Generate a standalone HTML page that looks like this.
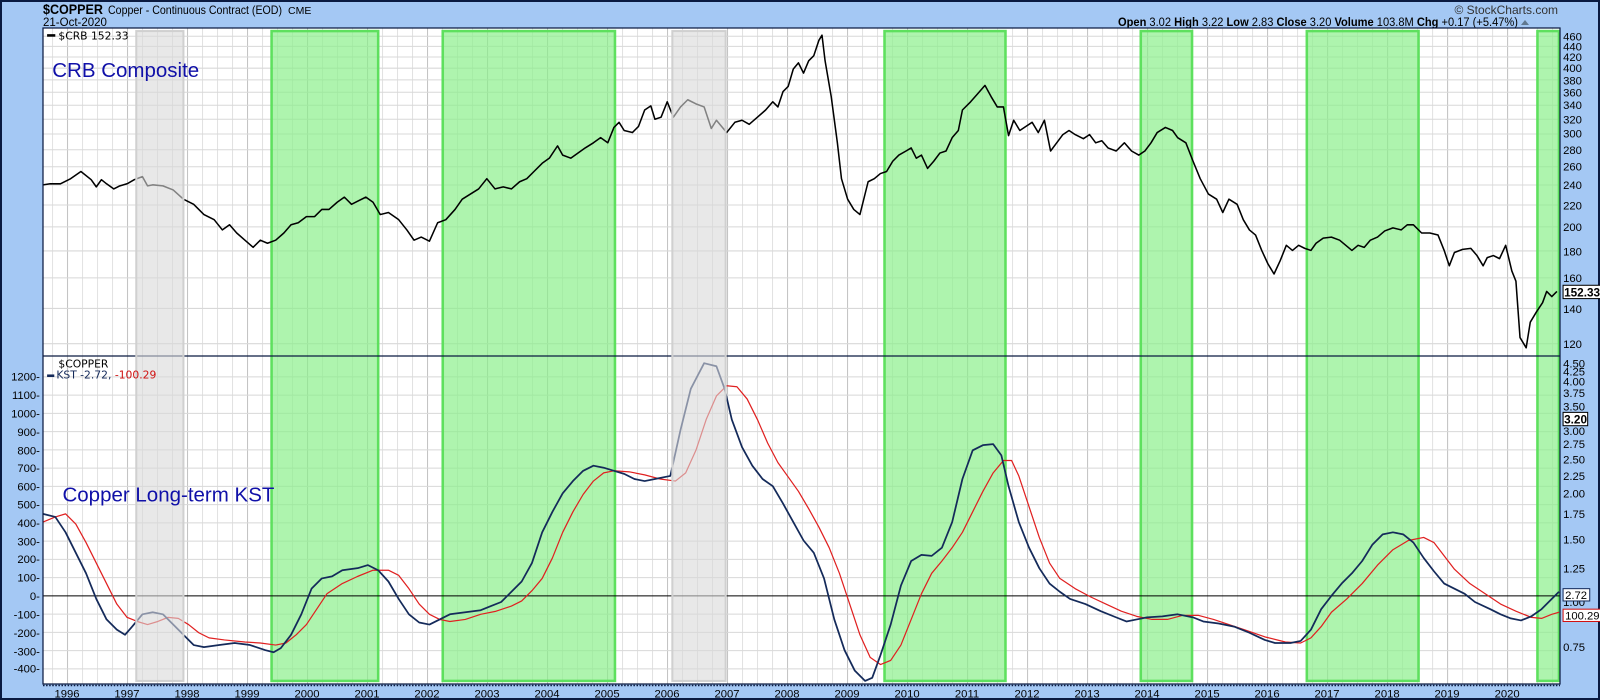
<!DOCTYPE html>
<html><head><meta charset="utf-8"><style>
html,body{margin:0;padding:0;background:#a4c8f4;}
svg{display:block;font-family:"Liberation Sans",Arial,sans-serif;}
</style></head><body>
<svg width="1600" height="700" viewBox="0 0 1600 700" xmlns="http://www.w3.org/2000/svg">
<defs>
<pattern id="vq" patternUnits="userSpaceOnUse" x="7.865" y="0" width="14.635" height="700">
<line x1="0.5" y1="0" x2="0.5" y2="700" stroke="#e2e2e2" stroke-width="1"/></pattern>
<pattern id="vy" patternUnits="userSpaceOnUse" x="7.86" y="0" width="58.54" height="700">
<line x1="0.5" y1="0" x2="0.5" y2="700" stroke="#c4c4c4" stroke-width="1"/></pattern>
</defs>
<rect x="0" y="0" width="1600" height="700" fill="#a4c8f4"/>
<rect x="1" y="1" width="1598" height="698" fill="none" stroke="#0a1a40" stroke-width="2"/>
<!-- header -->
<text x="43" y="14" font-size="14" font-weight="bold" fill="#000" textLength="60" lengthAdjust="spacingAndGlyphs">$COPPER</text>
<text x="108" y="14" font-size="12" fill="#000" textLength="174" lengthAdjust="spacingAndGlyphs">Copper - Continuous Contract (EOD)</text>
<text x="288" y="14" font-size="10.5" fill="#000">CME</text>
<text x="43" y="26" font-size="11.5" fill="#000">21-Oct-2020</text>
<text x="1558" y="14" font-size="12" fill="#333" text-anchor="end">© StockCharts.com</text>
<text x="1518" y="26" font-size="11.5" fill="#000" text-anchor="end" textLength="400" lengthAdjust="spacingAndGlyphs"><tspan font-weight="bold">Open</tspan> 3.02 <tspan font-weight="bold">High</tspan> 3.22 <tspan font-weight="bold">Low</tspan> 2.83 <tspan font-weight="bold">Close</tspan> 3.20 <tspan font-weight="bold">Volume</tspan> 103.8M <tspan font-weight="bold">Chg</tspan> +0.17 (+5.47%)</text>
<path d="M1521 25 l4 -5 l4 5z" fill="#607890"/>

<g transform="translate(43,28) scale(1.025) translate(-43,-28)">
<rect x="43" y="28" width="1480" height="640" fill="#fff"/>
<rect x="43" y="28" width="1480" height="640" fill="url(#vq)"/>
<rect x="43" y="28" width="1480" height="640" fill="url(#vy)"/>
<g stroke="#d8d8d8" stroke-width="1">
<line x1="43" x2="1523" y1="336" y2="336"/><line x1="43" x2="1523" y1="301.6" y2="301.6"/><line x1="43" x2="1523" y1="271.8" y2="271.8"/><line x1="43" x2="1523" y1="245.5" y2="245.5"/><line x1="43" x2="1523" y1="222" y2="222"/><line x1="43" x2="1523" y1="200.7" y2="200.7"/><line x1="43" x2="1523" y1="181.2" y2="181.2"/><line x1="43" x2="1523" y1="163.4" y2="163.4"/><line x1="43" x2="1523" y1="146.8" y2="146.8"/><line x1="43" x2="1523" y1="131.4" y2="131.4"/><line x1="43" x2="1523" y1="117" y2="117"/><line x1="43" x2="1523" y1="103.4" y2="103.4"/><line x1="43" x2="1523" y1="90.7" y2="90.7"/><line x1="43" x2="1523" y1="78.6" y2="78.6"/><line x1="43" x2="1523" y1="67.2" y2="67.2"/><line x1="43" x2="1523" y1="56.3" y2="56.3"/><line x1="43" x2="1523" y1="45.9" y2="45.9"/><line x1="43" x2="1523" y1="36" y2="36"/>
<line x1="43" x2="1523" y1="368.4" y2="368.4"/><line x1="43" x2="1523" y1="386.2" y2="386.2"/><line x1="43" x2="1523" y1="404" y2="404"/><line x1="43" x2="1523" y1="421.8" y2="421.8"/><line x1="43" x2="1523" y1="439.6" y2="439.6"/><line x1="43" x2="1523" y1="457.4" y2="457.4"/><line x1="43" x2="1523" y1="475.2" y2="475.2"/><line x1="43" x2="1523" y1="493" y2="493"/><line x1="43" x2="1523" y1="510.8" y2="510.8"/><line x1="43" x2="1523" y1="528.6" y2="528.6"/><line x1="43" x2="1523" y1="546.4" y2="546.4"/><line x1="43" x2="1523" y1="564.2" y2="564.2"/><line x1="43" x2="1523" y1="599.8" y2="599.8"/><line x1="43" x2="1523" y1="617.6" y2="617.6"/><line x1="43" x2="1523" y1="635.4" y2="635.4"/><line x1="43" x2="1523" y1="653.2" y2="653.2"/>
</g>
<g fill="#8cf08c" fill-opacity="0.7" stroke="#5ee05e" stroke-width="2.5">
<rect x="266" y="31" width="104" height="634"/>
<rect x="433" y="31" width="168" height="634"/>
<rect x="864" y="31" width="118" height="634"/>
<rect x="1114" y="31" width="50" height="634"/>
<rect x="1276" y="31" width="109" height="634"/>
<rect x="1501" y="31" width="21" height="634"/>
</g>
<line x1="43" x2="1523" y1="348" y2="348" stroke="#0a1a40" stroke-width="1.2"/>
<line x1="43" x2="1523" y1="582" y2="582" stroke="#000" stroke-width="1"/>
<polyline fill="none" stroke="#000" stroke-width="1.5" stroke-linejoin="round" points="43,181 50,180 60,180 70,175 80,168 90,176 95,183 100,176 105,180 112,185 118,182 125,180 132,176 140,173 145,182 150,181 160,182 170,186 180,195 190,200 200,210 210,215 218,225 225,220 232,228 240,235 248,242 255,235 262,238 270,235 278,228 285,220 292,218 300,212 308,212 315,205 322,205 330,198 337,193 344,200 350,197 358,193 365,198 372,210 380,208 390,215 398,225 405,235 412,232 420,236 428,218 436,215 445,205 452,195 460,190 468,185 476,175 484,185 492,183 500,185 508,178 515,175 522,168 530,160 537,155 545,143 550,152 558,155 565,150 572,145 580,140 587,135 594,140 600,125 605,120 610,128 618,130 624,124 630,108 636,104 640,117 646,115 652,100 658,115 665,105 672,98 680,102 688,105 695,126 700,118 710,130 718,120 725,118 732,122 740,115 748,108 755,100 760,105 765,90 770,85 775,68 780,62 785,72 790,60 795,55 800,40 803,35 806,60 812,95 818,140 822,175 828,195 834,205 840,210 848,178 854,175 860,170 866,168 872,158 878,152 885,148 890,145 895,155 900,152 906,165 912,158 918,150 924,148 930,135 936,128 940,108 948,100 955,92 962,84 968,95 974,105 980,105 985,133 990,118 996,128 1002,124 1008,120 1014,130 1020,118 1026,148 1032,140 1038,132 1044,128 1050,132 1058,136 1064,132 1070,140 1076,138 1082,145 1090,148 1098,140 1105,148 1112,152 1118,148 1124,140 1130,130 1138,125 1145,128 1150,135 1158,140 1165,158 1172,175 1180,190 1188,195 1194,208 1200,195 1208,200 1214,215 1220,225 1226,230 1232,245 1238,258 1244,268 1250,255 1256,240 1262,245 1268,240 1274,243 1280,245 1285,238 1292,233 1300,232 1308,235 1314,240 1320,245 1326,240 1332,242 1338,235 1345,232 1352,226 1360,223 1368,225 1374,220 1380,220 1388,228 1396,228 1404,230 1410,245 1415,260 1420,247 1428,244 1436,243 1442,250 1448,260 1452,252 1458,250 1464,253 1470,240 1476,265 1480,275 1484,330 1490,340 1494,315 1500,305 1506,296 1510,285 1515,290 1520,285"/>
<polyline fill="none" stroke="#e02020" stroke-width="1.2" stroke-linejoin="round" points="43,510 55,505 65,502 75,512 85,530 95,550 105,570 115,590 125,603 135,607 145,610 155,607 165,603 175,604 185,610 195,618 205,623 220,625 240,627 255,628 270,630 280,628 290,620 300,610 310,595 320,580 335,570 350,563 365,557 380,557 390,562 400,575 410,590 420,600 430,605 440,607 455,605 470,600 485,597 500,592 510,587 520,577 530,565 540,545 550,520 560,500 570,483 580,470 590,462 600,460 615,461 630,464 645,468 660,470 670,462 680,440 690,410 700,387 710,377 720,378 730,390 740,410 750,433 760,452 770,466 780,480 790,497 800,515 810,535 820,560 830,590 840,620 850,642 860,649 870,645 880,630 890,605 900,580 910,560 920,548 930,535 940,520 950,500 960,480 970,462 980,450 988,450 995,465 1005,495 1015,525 1025,550 1035,565 1050,575 1065,583 1080,590 1095,597 1110,602 1125,605 1140,605 1155,601 1170,601 1185,605 1200,610 1215,615 1235,622 1255,627 1270,628 1280,623 1290,612 1300,598 1315,585 1330,570 1345,552 1360,537 1375,528 1390,525 1400,530 1410,543 1420,556 1435,570 1450,580 1465,590 1480,597 1495,603 1505,604 1515,600 1522,598"/>
<polyline fill="none" stroke="#142a5a" stroke-width="1.7" stroke-linejoin="round" points="43,502 55,505 65,520 75,540 85,560 95,585 105,605 115,615 123,620 130,612 140,600 150,598 160,600 170,610 180,620 190,630 200,632 215,630 230,628 245,630 260,635 268,637 275,633 285,620 295,600 305,575 315,565 325,563 335,557 350,555 360,552 370,557 380,568 390,585 400,600 410,608 420,610 430,605 440,600 455,598 470,596 480,592 490,588 500,578 510,568 520,550 530,520 540,500 550,482 560,470 570,460 580,455 590,457 600,460 610,463 620,468 630,470 640,468 655,465 665,420 675,380 688,355 700,358 708,380 715,410 725,437 735,455 745,468 755,475 765,492 775,510 785,528 795,540 805,565 815,605 825,635 835,655 845,665 852,662 860,640 870,610 880,572 890,548 900,542 910,543 920,535 930,510 940,468 950,440 960,435 970,434 978,445 985,475 995,510 1005,535 1015,555 1025,570 1035,578 1045,585 1060,590 1075,597 1090,603 1100,607 1110,605 1120,603 1135,602 1150,600 1165,603 1175,607 1190,609 1205,612 1220,618 1235,625 1245,628 1260,628 1270,626 1280,615 1290,595 1300,582 1310,570 1320,560 1330,548 1340,532 1350,522 1360,520 1370,522 1380,530 1390,545 1400,558 1410,570 1420,575 1430,580 1440,588 1455,595 1465,600 1475,604 1485,606 1495,602 1505,595 1515,585 1522,578"/>
<g fill="#d8d8d8" fill-opacity="0.6" stroke="#d0d0d0" stroke-width="2">
<rect x="134" y="31" width="46" height="634"/>
<rect x="657" y="31" width="52" height="634"/>
</g>
<rect x="47" y="34" width="8" height="2.5" fill="#000"/>
<text x="58" y="39" font-family="DejaVu Sans,sans-serif" font-size="10.5" fill="#000">$CRB 152.33</text>
<text x="52" y="76" font-size="20" fill="#1010a8">CRB Composite</text>
<text x="58" y="359" font-family="DejaVu Sans,sans-serif" font-size="10.5" fill="#000">$COPPER</text>
<rect x="47" y="366" width="7" height="2.5" fill="#142a5a"/>
<text x="56" y="370" font-family="DejaVu Sans,sans-serif" font-size="10.5" fill="#142a5a">KST -2.72, <tspan fill="#d01010">-100.29</tspan></text>
<text x="62" y="490" font-size="20" fill="#1010a8">Copper Long-term KST</text>
<rect x="43" y="28" width="1480" height="640" fill="none" stroke="#0a1a40" stroke-width="1.2"/>
<g font-size="11" fill="#000">
<text x="1526" y="340">120</text><text x="1526" y="306">140</text><text x="1526" y="276">160</text><text x="1526" y="250">180</text><text x="1526" y="226">200</text><text x="1526" y="205">220</text><text x="1526" y="185">240</text><text x="1526" y="167">260</text><text x="1526" y="151">280</text><text x="1526" y="135">300</text><text x="1526" y="121">320</text><text x="1526" y="107">340</text><text x="1526" y="95">360</text><text x="1526" y="83">380</text><text x="1526" y="71">400</text><text x="1526" y="60">420</text><text x="1526" y="50">440</text><text x="1526" y="40">460</text>
<text x="1526" y="359">4.50</text><text x="1526" y="367">4.25</text><text x="1526" y="377">4.00</text><text x="1526" y="388">3.75</text><text x="1526" y="401">3.50</text><text x="1526" y="425">3.00</text><text x="1526" y="438">2.75</text><text x="1526" y="453">2.50</text><text x="1526" y="469">2.25</text><text x="1526" y="486">2.00</text><text x="1526" y="506">1.75</text><text x="1526" y="531">1.50</text><text x="1526" y="559">1.25</text><text x="1526" y="592">1.00</text><text x="1526" y="636">0.75</text>
</g>
<rect x="1526" y="279" width="38" height="13" fill="#fff" stroke="#000"/>
<text x="1527" y="290" font-size="11.5" font-weight="bold">152.33</text>
<rect x="1526" y="403" width="24" height="13" fill="#fff" stroke="#000"/>
<text x="1527" y="414" font-size="11.5" font-weight="bold">3.20</text>
<rect x="1526" y="575" width="26" height="12" fill="#fff" stroke="#142a5a"/>
<text x="1528" y="585" font-size="11">2.72</text>
<rect x="1526" y="595" width="38" height="12" fill="#fff" stroke="#d01010"/>
<text x="1528" y="605" font-size="11">100.29</text>
<g font-size="11" fill="#000" text-anchor="end">
<text x="40" y="372">1200-</text><text x="40" y="390">1100-</text><text x="40" y="408">1000-</text><text x="40" y="426">900-</text><text x="40" y="444">800-</text><text x="40" y="461">700-</text><text x="40" y="479">600-</text><text x="40" y="497">500-</text><text x="40" y="515">400-</text><text x="40" y="533">300-</text><text x="40" y="550">200-</text><text x="40" y="568">100-</text><text x="40" y="586">0-</text><text x="40" y="604">-100-</text><text x="40" y="622">-200-</text><text x="40" y="640">-300-</text><text x="40" y="657">-400-</text>
</g>
<line x1="43" x2="1523" y1="669.5" y2="669.5" stroke="#0a1a40" stroke-width="1.5" stroke-dasharray="1.5,1.5"/>
<g font-size="11" fill="#000" text-anchor="middle">
<text x="66.4" y="681">1996</text><text x="124.9" y="681">1997</text><text x="183.5" y="681">1998</text><text x="242" y="681">1999</text><text x="300.6" y="681">2000</text><text x="359.1" y="681">2001</text><text x="417.6" y="681">2002</text><text x="476.2" y="681">2003</text><text x="534.7" y="681">2004</text><text x="593.3" y="681">2005</text><text x="651.8" y="681">2006</text><text x="710.3" y="681">2007</text><text x="768.9" y="681">2008</text><text x="827.4" y="681">2009</text><text x="886" y="681">2010</text><text x="944.5" y="681">2011</text><text x="1003" y="681">2012</text><text x="1061.6" y="681">2013</text><text x="1120.1" y="681">2014</text><text x="1178.7" y="681">2015</text><text x="1237.2" y="681">2016</text><text x="1295.7" y="681">2017</text><text x="1354.3" y="681">2018</text><text x="1412.8" y="681">2019</text><text x="1471.4" y="681">2020</text>
</g>
</g>
</svg>
</body></html>
